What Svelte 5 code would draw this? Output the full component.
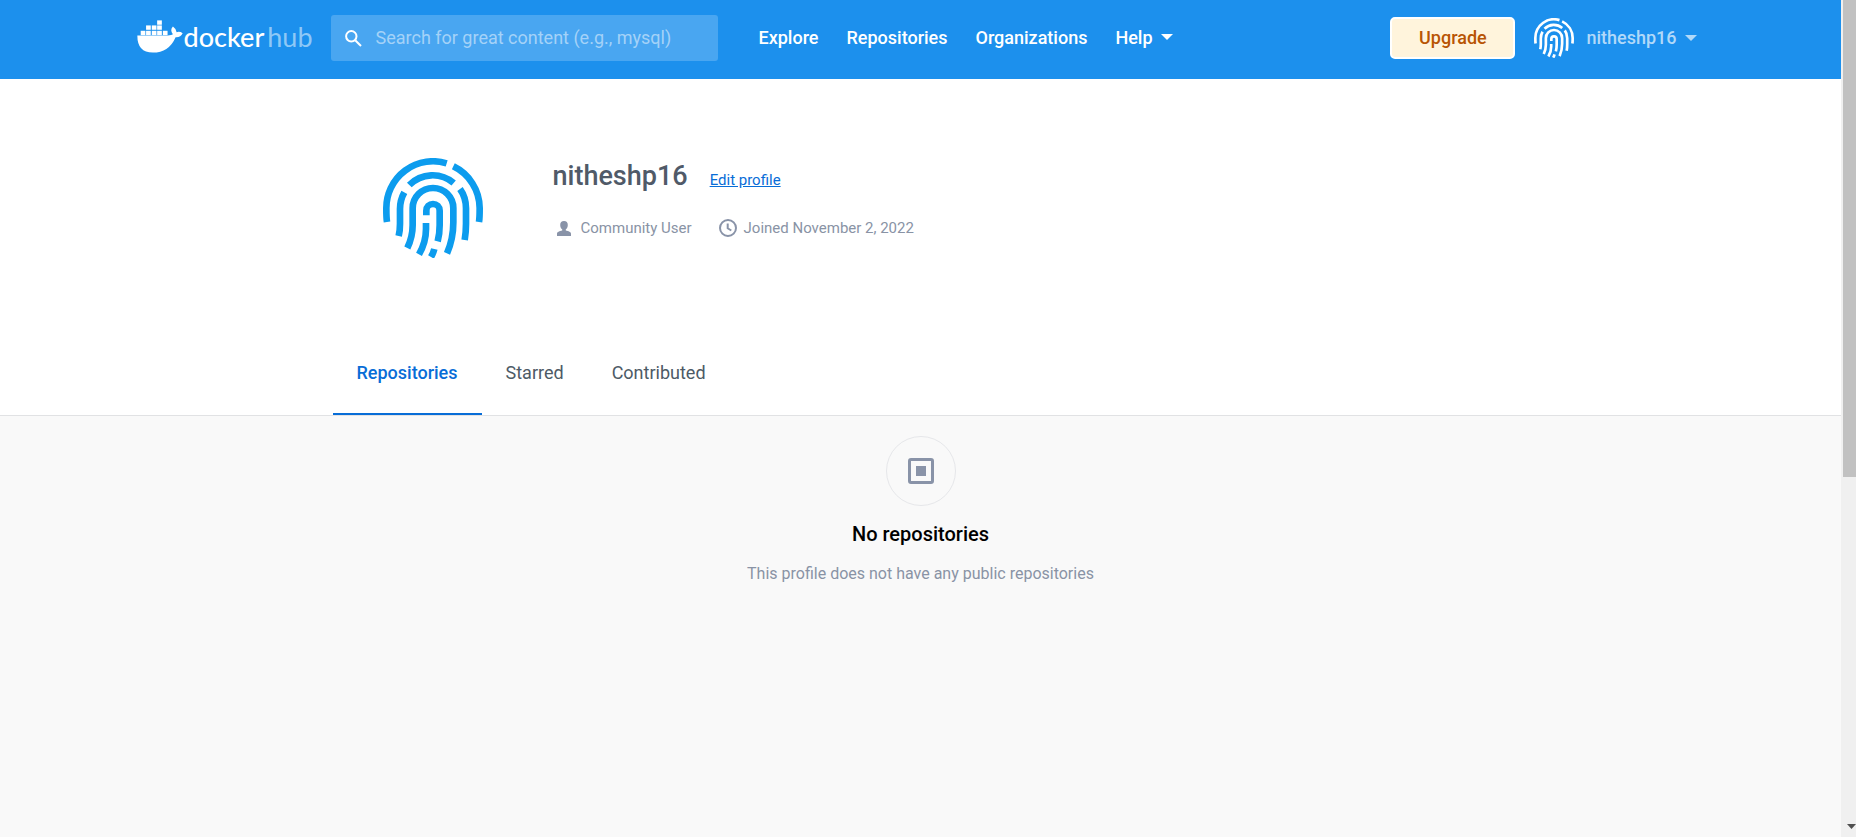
<script>
  const links = ['Explore', 'Repositories', 'Organizations'];
  const tabs = ['Repositories', 'Starred', 'Contributed'];
  const user = 'nitheshp16';
  let active = $state('Repositories');

  // Whale cargo: [x, y] of every container
  const cargo = [
    [111, 60],
    [78, 75], [95, 75], [111, 75],
    [62, 91], [78, 91], [95, 91], [111, 91], [128, 91]
  ];
</script>

{#snippet fingerprint()}
  <svg class="print" viewBox="39 39 300 300" aria-hidden="true">
    <path d="M51 231C49 220 49 205 49 189A140 140 0 0 1 230 55" />
    <path d="M250 64A140 140 0 0 1 329 189C329 205 329 220 327 231" />
    <path d="M118 120A98 98 0 0 1 251 114" />
    <path d="M103 142C93 160 90 174 90 192V236Q90 256 86 273" />
    <path d="M270 132C283 150 288 168 288 190V236Q288 262 284 285" />
    <path d="M112 309Q128 276 128 240V190A61 61 0 0 1 250 190V232Q250 282 231 325" />
    <path d="M169 211V197A20 20 0 0 1 209 197V240Q209 268 203 289" />
    <path d="M168 234V252Q168 292 147 328" />
    <path d="M193 312Q190 324 183 336" />
  </svg>
{/snippet}

<div class="window">
  <div class="page">
    <header>
      <div class="bar">
        <a class="logo" href="#home">
          <svg class="whale" viewBox="51 59 137 98" aria-hidden="true">
            {#each cargo as [x, y]}
              <rect {x} {y} width="14" height="13" />
            {/each}
            <path d="M52 105H143Q155 104 158 101Q148 89 158 78Q167 84 169 95Q178 92 187 98Q181 111 166 110Q146 156 98 156Q52 156 52 105Z" />
          </svg>
          <span class="word">docker</span><span class="hub">hub</span>
        </a>
        <label class="search">
          <svg viewBox="0 0 17 17" aria-hidden="true">
            <circle cx="6.3" cy="6.3" r="5.2" />
            <path d="M10.2 10.2L16 16" />
          </svg>
          <input type="search" aria-label="Search" placeholder="Search for great content (e.g., mysql)" />
        </label>
        <nav>
          {#each links as link}
            <a href="#{link}">{link}</a>
          {/each}
          <button class="drop">Help <i class="caret"></i></button>
        </nav>
        <button class="upgrade">Upgrade</button>
        <button class="drop account">
          {@render fingerprint()}
          <span>{user}</span>
          <i class="caret"></i>
        </button>
      </div>
    </header>

    <section class="profile">
      <div class="inner">
        <div class="person">
          {@render fingerprint()}
          <div>
            <div class="title">
              <h1>{user}</h1>
              <a href="#edit">Edit profile</a>
            </div>
            <div class="facts">
              <span>
                <svg class="user" viewBox="0 0 14 15" aria-hidden="true">
                  <path d="M7 0C9.500 0 10.800 1.600 10.800 4C10.800 6.200 9.900 7.600 8.800 8.300V9.500C11.500 10.200 14 10.800 14 12.800V15H0V12.800C0 10.800 2.500 10.200 5.200 9.500V8.300C4.100 7.600 3.200 6.200 3.200 4C3.200 1.600 4.500 0 7 0Z" />
                </svg>
                Community User
              </span>
              <span>
                <svg class="clock" viewBox="0 0 18 18" aria-hidden="true">
                  <circle cx="9" cy="9" r="8" />
                  <path d="M8.700 4.500V9.300L12.300 11.500" />
                </svg>
                Joined November 2, 2022
              </span>
            </div>
          </div>
        </div>
        <div class="tabs" role="tablist">
          {#each tabs as tab}
            <button role="tab" aria-selected={active === tab} onclick={() => (active = tab)}>{tab}</button>
          {/each}
        </div>
      </div>
    </section>

    <main>
      <div class="badge">
        <svg viewBox="0 0 28 28" aria-hidden="true">
          <rect class="frame" x="2.500" y="2.500" width="23" height="23" rx="1.500" />
          <rect x="9" y="9" width="10" height="10" />
        </svg>
      </div>
      <h2>No repositories</h2>
      <p>This profile does not have any public repositories</p>
    </main>
  </div>

  <div class="scroll" aria-hidden="true">
    <div class="thumb"></div>
    <svg viewBox="0 0 9 5"><path d="M0 0H9L4.500 5Z" /></svg>
  </div>
</div>

<style>
  .window {
    display: grid;
    grid-template-columns: 1fr 15px;
    height: 100vh;
    font-family: Roboto, sans-serif;
    color: #445d6e;
  }
  .page {
    display: flex;
    flex-direction: column;
    min-width: 0;
  }
  a {
    text-decoration: none;
  }
  button {
    border: 0;
    padding: 0;
    background: none;
    font: inherit;
    cursor: pointer;
  }
  svg {
    display: block;
    flex: none;
  }
  h1, h2, p {
    margin: 0;
  }

  header {
    background: #1c90ed;
    padding: 15px 16px 18px;
  }
  .bar {
    display: flex;
    align-items: center;
    max-width: 1568px;
    height: 46px;
    margin: 0 auto;
    font-size: 18px;
    font-weight: 500;
  }
  .logo {
    display: flex;
    align-items: center;
    width: 194px;
    padding-bottom: 4px;
    color: #fff;
    font: 500 27px/32px Lato, sans-serif;
  }
  .whale {
    width: 46px;
    height: 33px;
    fill: #fff;
    margin-right: 1px;
  }
  .word, .hub {
    padding-top: 2px;
  }
  .hub {
    margin-left: 3px;
    font-weight: 400;
    color: #8ec8f6;
  }
  .search {
    display: flex;
    align-items: center;
    gap: 14px;
    width: 387px;
    height: 46px;
    padding: 0 14px;
    box-sizing: border-box;
    border-radius: 3px;
    background: #49a6f1;
  }
  .search svg {
    width: 17px;
    height: 17px;
    fill: none;
    stroke: #fff;
    stroke-width: 2;
  }
  input {
    flex: 1;
    min-width: 0;
    border: 0;
    padding: 0;
    outline: 0;
    background: none;
    color: #fff;
    font: 400 18px/24px Roboto, sans-serif;
  }
  input::placeholder {
    color: #a4d2f8;
    opacity: 1;
  }
  nav {
    display: flex;
    align-items: center;
    gap: 28px;
    margin-left: 41px;
    padding-bottom: 2px;
    flex: 1;
  }
  nav a, .drop {
    color: #fff;
  }
  .drop {
    display: flex;
    align-items: center;
    gap: 8px;
  }
  .caret {
    border: 6px solid transparent;
    border-top-color: currentColor;
    border-bottom: 0;
  }
  .upgrade {
    width: 125px;
    height: 42px;
    padding-bottom: 2px;
    border: 2px solid #fff;
    border-radius: 5px;
    background: #fff4dc;
    color: #b85504;
  }
  .account {
    margin: 0 8px 0 19px;
    color: #b1d9f9;
  }
  .account span {
    margin-left: 4px;
    padding-bottom: 2px;
  }
  .print {
    width: 40px;
    height: 40px;
    fill: none;
    stroke: #fff;
    stroke-width: 20;
  }

  .profile {
    background: #fff;
    border-bottom: 1px solid #e1e2e4;
  }
  .inner {
    max-width: 1176px;
    margin: 0 auto;
  }
  .person {
    display: flex;
    gap: 70px;
    padding: 79px 50px 0;
    height: 175px;
    box-sizing: content-box;
  }
  .person .print {
    width: 100px;
    height: 100px;
    stroke: #0c9cee;
  }
  .title {
    display: flex;
    align-items: baseline;
    gap: 22px;
  }
  h1 {
    font-size: 27px;
    line-height: 36px;
    font-weight: 500;
    color: #505a68;
  }
  .title a {
    font-size: 15px;
    color: #086dd7;
    text-decoration: underline;
  }
  .facts {
    display: flex;
    gap: 27px;
    margin-top: 23px;
    padding-left: 4px;
    font-size: 15px;
    line-height: 22px;
    color: #8993a5;
  }
  .facts span {
    display: flex;
    align-items: center;
    gap: 7px;
  }
  .user {
    width: 14px;
    height: 15px;
    fill: #8993a8;
    margin-right: 3px;
  }
  .clock {
    width: 18px;
    height: 18px;
    fill: none;
    stroke: #8993a8;
    stroke-width: 2;
  }
  .tabs {
    display: flex;
  }
  .tabs button {
    height: 82px;
    padding: 0 24px 2px;
    border-bottom: 2px solid transparent;
    font-size: 18px;
    color: #4d5a66;
  }
  .tabs button[aria-selected='true'] {
    border-color: #086dd7;
    color: #086dd7;
    font-weight: 500;
  }

  main {
    flex: 1;
    display: flex;
    flex-direction: column;
    align-items: center;
    padding-top: 20px;
    background: #f9f9f9;
  }
  .badge {
    display: grid;
    place-items: center;
    width: 70px;
    height: 70px;
    box-sizing: border-box;
    border: 1px solid #e6e7ea;
    border-radius: 50%;
  }
  .badge svg {
    width: 28px;
    height: 28px;
    fill: #8993a8;
  }
  .badge .frame {
    fill: none;
    stroke: #8993a8;
    stroke-width: 3;
  }
  h2 {
    margin-top: 14px;
    font-size: 20px;
    line-height: 28px;
    font-weight: 500;
    color: #000;
  }
  p {
    margin-top: 14px;
    font-size: 16px;
    line-height: 24px;
    color: #8993a5;
  }

  .scroll {
    display: flex;
    flex-direction: column;
    justify-content: space-between;
    align-items: flex-end;
    padding-left: 2px;
    background: #f0f0f0;
  }
  .thumb {
    width: 100%;
    height: 57%;
    background: #c1c1c1;
  }
  .scroll svg {
    width: 9px;
    height: 5px;
    margin-bottom: 8px;
    fill: #505050;
  }
</style>
